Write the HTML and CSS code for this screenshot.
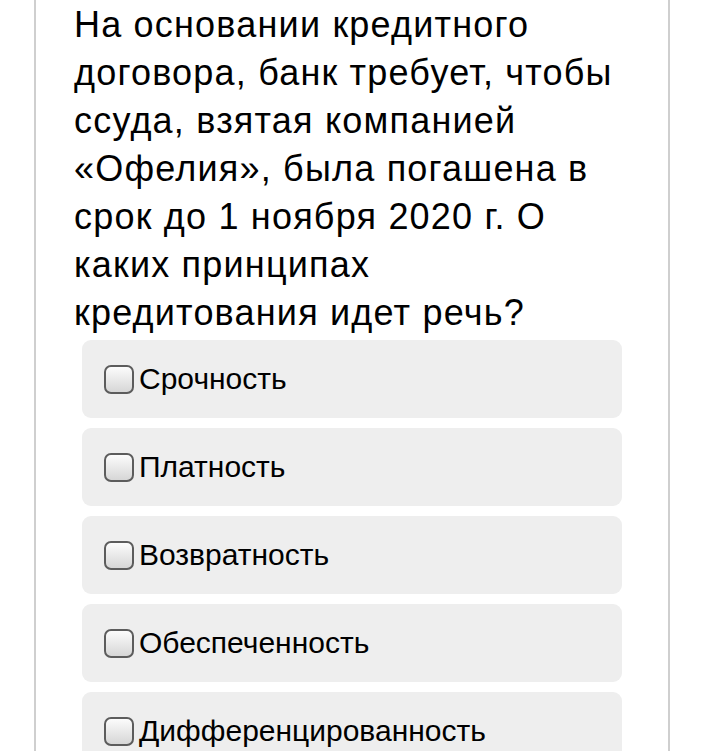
FILE: index.html
```html
<!DOCTYPE html>
<html lang="ru">
<head>
    <meta charset="UTF-8">
    <meta name="viewport" content="width=device-width, initial-scale=1.0">
    <title>Вопрос</title>
    <link rel="stylesheet" href="styles.css">
</head>
<body>
    <div class="card">
        <p class="question">На основании кредитного договора, банк требует, чтобы ссуда, взятая компанией «Офелия», была погашена в срок до 1 ноября 2020 г. О каких принципах кредитования идет речь?</p>
        <div class="options">
            <label class="option"><input type="checkbox"><span>Срочность</span></label>
            <label class="option"><input type="checkbox"><span>Платность</span></label>
            <label class="option"><input type="checkbox"><span>Возвратность</span></label>
            <label class="option"><input type="checkbox"><span>Обеспеченность</span></label>
            <label class="option"><input type="checkbox"><span>Дифференцированность</span></label>
        </div>
    </div>
</body>
</html>
```

FILE: styles.css
```css
/* базовые стили */
* {
    box-sizing: border-box;
}

body {
    margin: 0;
    background: #fff;
    font-family: "Liberation Sans", Arial, sans-serif;
    color: #000;
}

/* карточка вопроса */
.card {
    margin: 0 34px;
    padding-top: 1px;
    border-left: 2px solid #cfcfcf;
    border-right: 2px solid #cfcfcf;
    min-height: 751px;
}

.question {
    margin: 0 46px 3px 38px;
    font-size: 36px;
    line-height: 48px;
    letter-spacing: 1.2px;
}

/* варианты ответа */
.options {
    margin: 0 46px;
    display: flex;
    flex-direction: column;
    gap: 10px;
}

.option {
    height: 78px;
    padding-left: 22px;
    display: flex;
    align-items: center;
    gap: 5px;
    background: #eeeeee;
    border-radius: 9px;
    font-size: 30px;
}

.option input {
    appearance: none;
    -webkit-appearance: none;
    margin: 0;
    width: 30px;
    height: 29px;
    flex: none;
    border: 2px solid #5c5c5c;
    border-radius: 7px;
    background: linear-gradient(#fcfcfc, #d6d6d6);
}
```
